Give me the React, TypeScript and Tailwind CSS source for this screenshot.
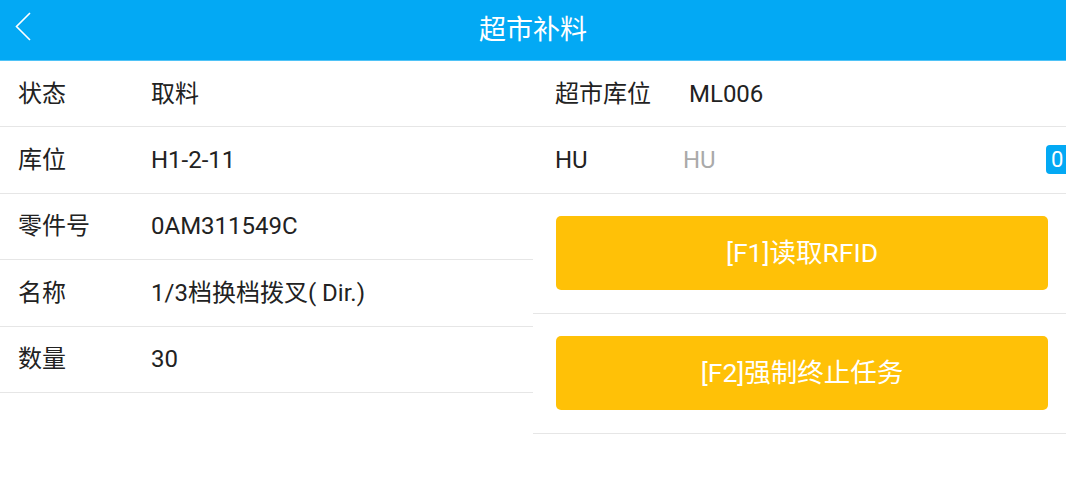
import React from "react";

const leftRows = [
  { label: "状态", value: "取料" },
  { label: "库位", value: "H1-2-11" },
  { label: "零件号", value: "0AM311549C" },
  { label: "名称", value: "1/3档换档拨叉( Dir.)" },
  { label: "数量", value: "30" },
];

const font = { fontFamily: "Roboto, 'Noto Sans CJK SC', sans-serif" };

export default function App() {
  return (
    <div className="w-[1066px] h-[500px] bg-white overflow-hidden text-[#222]" style={font}>
      <div className="h-[61px] bg-[#03a9f4] border-b border-[#4fc3f7] flex items-center relative">
        <button className="absolute left-[14px] top-[12px] w-[20px] h-[30px] flex items-center">
          <svg width="20" height="30" viewBox="0 0 20 30" fill="none">
            <path d="M16 1 L2.5 14.5 L16 28" stroke="white" strokeWidth="1.6" />
          </svg>
        </button>
        <div className="flex-1 text-center text-white text-[27px] leading-none">超市补料</div>
      </div>

      <div className="flex">
        <div className="w-[533px] shrink-0">
          {leftRows.map((row, i) => (
            <div
              key={i}
              className="h-[66.4px] flex items-center border-b border-[#e6e6e6] text-[24px]"
            >
              <span className="w-[151px] pl-[18px] shrink-0">{row.label}</span>
              <span>{row.value}</span>
            </div>
          ))}
        </div>

        <div className="flex-1 overflow-hidden">
          <div className="h-[66px] flex items-center border-b border-[#e6e6e6] text-[24px]">
            <span className="w-[156px] pl-[22px] shrink-0">超市库位</span>
            <span>ML006</span>
          </div>
          <div className="h-[66.5px] flex items-center border-b border-[#e6e6e6] text-[24px]">
            <span className="w-[150px] pl-[22px] shrink-0">HU</span>
            <input
              placeholder="HU"
              className="w-[363px] shrink-0 outline-none placeholder:text-[#aaa] bg-transparent"
            />
            <span className="w-[40px] h-[29px] shrink-0 rounded-[4px] bg-[#03a9f4] text-white text-[22px] flex items-center pl-[5px]">
              0
            </span>
          </div>
          <div className="h-[120px] flex items-center border-b border-[#e6e6e6] pl-[23px] pr-[18px]">
            <button className="w-full h-[74px] rounded-[5px] bg-[#ffc107] text-white text-[26.5px]">
              [F1]读取RFID
            </button>
          </div>
          <div className="h-[120px] flex items-center border-b border-[#e6e6e6] pl-[23px] pr-[18px]">
            <button className="w-full h-[74px] rounded-[5px] bg-[#ffc107] text-white text-[26.5px]">
              [F2]强制终止任务
            </button>
          </div>
        </div>
      </div>
    </div>
  );
}
